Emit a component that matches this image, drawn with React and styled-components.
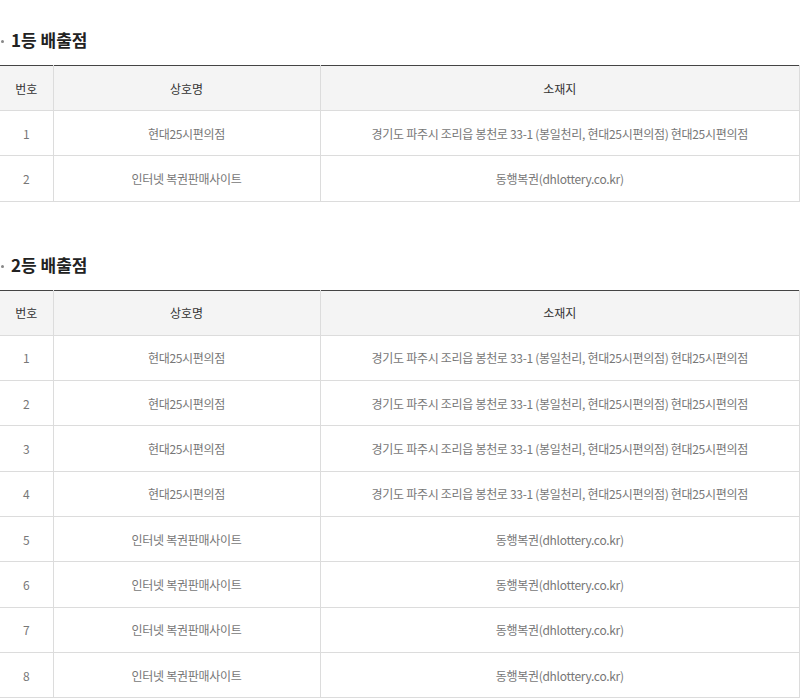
import styled, { createGlobalStyle } from "styled-components";

const GlobalStyle = createGlobalStyle`
  body {
    margin: 0;
    background: #fff;
    font-family: "Noto Sans CJK KR", "Noto Sans", sans-serif;
  }
`;

const firstRank = [
  { no: 1, name: "현대25시편의점", addr: "경기도 파주시 조리읍 봉천로 33-1 (봉일천리, 현대25시편의점) 현대25시편의점" },
  { no: 2, name: "인터넷 복권판매사이트", addr: "동행복권(dhlottery.co.kr)" },
];

const secondRank = [
  ...[1, 2, 3, 4].map((no) => ({
    no,
    name: "현대25시편의점",
    addr: "경기도 파주시 조리읍 봉천로 33-1 (봉일천리, 현대25시편의점) 현대25시편의점",
  })),
  ...[5, 6, 7, 8].map((no) => ({
    no,
    name: "인터넷 복권판매사이트",
    addr: "동행복권(dhlottery.co.kr)",
  })),
];

const StoreTable = ({ title, rows }) => (
  <Section>
    <Title>{title}</Title>
    <Table>
      <colgroup>
        <col style={{ width: 53 }} />
        <col style={{ width: 267 }} />
        <col />
      </colgroup>
      <thead>
        <tr>
          <Th>번호</Th>
          <Th>상호명</Th>
          <Th>소재지</Th>
        </tr>
      </thead>
      <tbody>
        {rows.map((r) => (
          <tr key={r.no}>
            <Td>{r.no}</Td>
            <Td>{r.name}</Td>
            <Td>{r.addr}</Td>
          </tr>
        ))}
      </tbody>
    </Table>
  </Section>
);

const App = () => {
  return (
    <Page>
      <GlobalStyle />
      <StoreTable title="1등 배출점" rows={firstRank} />
      <StoreTable title="2등 배출점" rows={secondRank} />
    </Page>
  );
};

const Page = styled.div`
  width: 800px;
  padding-top: 28px;
`;

const Section = styled.section`
  margin-bottom: 51px;
`;

const Title = styled.h3`
  position: relative;
  margin: 0 0 13px;
  padding-left: 11px;
  height: 24px;
  line-height: 24px;
  font-size: 17px;
  font-weight: 700;
  color: #222;
  letter-spacing: 0;

  &::before {
    content: "";
    position: absolute;
    left: 1px;
    top: 12px;
    width: 3px;
    height: 3px;
    border-radius: 50%;
    background: #888;
  }
`;

const Table = styled.table`
  width: 800px;
  border-collapse: collapse;
  table-layout: fixed;
  border-top: 1px solid #444;
`;

const Th = styled.th`
  height: 44px;
  padding: 0;
  background: #f4f4f4;
  border: 1px solid #dcdcdc;
  border-top: none;
  border-left: none;
  font-size: 12px;
  font-weight: 400;
  color: #333;
  text-align: center;
`;

const Td = styled.td`
  height: 44.33px;
  padding: 0;
  border: 1px solid #dcdcdc;
  border-left: none;
  font-size: 12px;
  color: #777;
  text-align: center;
  letter-spacing: -0.3px;
  white-space: nowrap;
`;

export default App;
